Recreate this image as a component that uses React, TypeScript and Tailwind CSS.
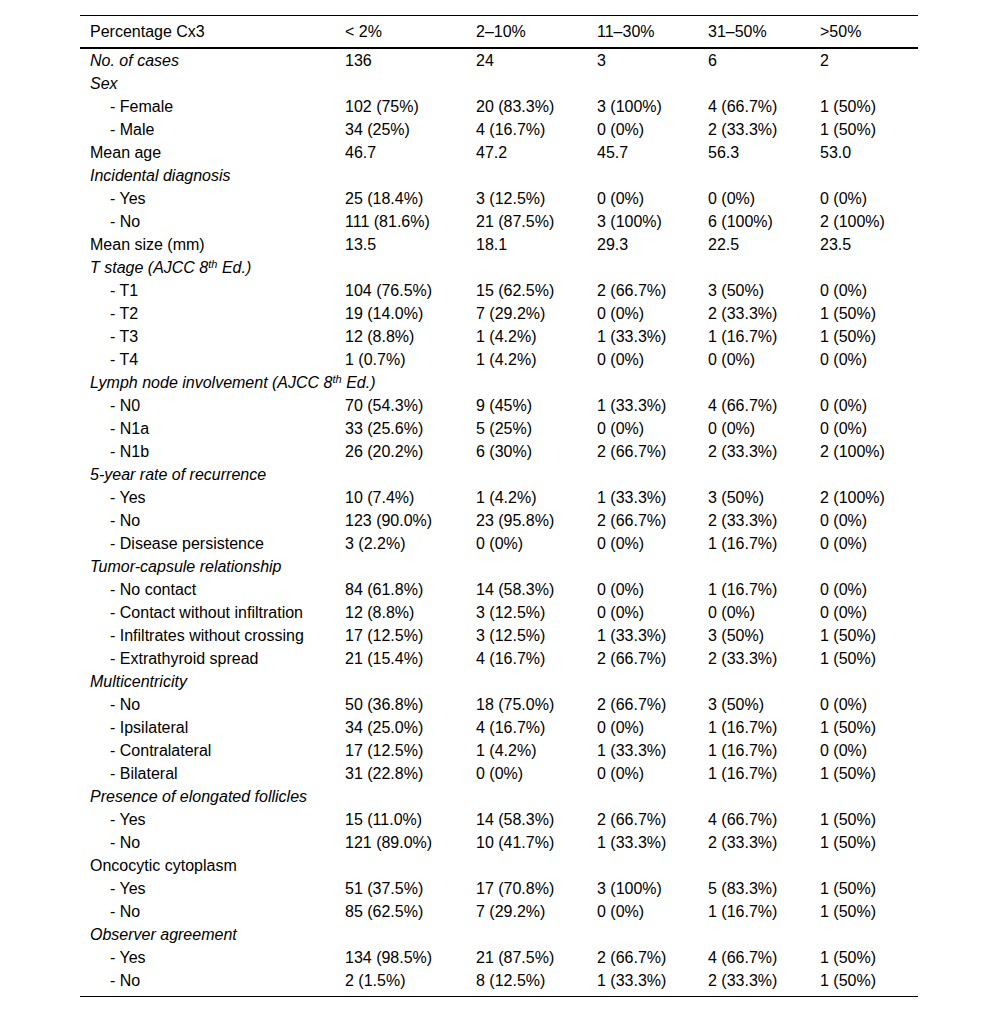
type Row = {
  label: string
  sup?: [string, string]
  kind: 'head' | 'plain' | 'sub'
  values?: string[]
}

const rows: Row[] = [
  { label: 'No. of cases', kind: 'head', values: ['136', '24', '3', '6', '2'] },
  { label: 'Sex', kind: 'head' },
  { label: '- Female', kind: 'sub', values: ['102 (75%)', '20 (83.3%)', '3 (100%)', '4 (66.7%)', '1 (50%)'] },
  { label: '- Male', kind: 'sub', values: ['34 (25%)', '4 (16.7%)', '0 (0%)', '2 (33.3%)', '1 (50%)'] },
  { label: 'Mean age', kind: 'plain', values: ['46.7', '47.2', '45.7', '56.3', '53.0'] },
  { label: 'Incidental diagnosis', kind: 'head' },
  { label: '- Yes', kind: 'sub', values: ['25 (18.4%)', '3 (12.5%)', '0 (0%)', '0 (0%)', '0 (0%)'] },
  { label: '- No', kind: 'sub', values: ['111 (81.6%)', '21 (87.5%)', '3 (100%)', '6 (100%)', '2 (100%)'] },
  { label: 'Mean size (mm)', kind: 'plain', values: ['13.5', '18.1', '29.3', '22.5', '23.5'] },
  { label: 'T stage (AJCC 8', sup: ['th', ' Ed.)'], kind: 'head' },
  { label: '- T1', kind: 'sub', values: ['104 (76.5%)', '15 (62.5%)', '2 (66.7%)', '3 (50%)', '0 (0%)'] },
  { label: '- T2', kind: 'sub', values: ['19 (14.0%)', '7 (29.2%)', '0 (0%)', '2 (33.3%)', '1 (50%)'] },
  { label: '- T3', kind: 'sub', values: ['12 (8.8%)', '1 (4.2%)', '1 (33.3%)', '1 (16.7%)', '1 (50%)'] },
  { label: '- T4', kind: 'sub', values: ['1 (0.7%)', '1 (4.2%)', '0 (0%)', '0 (0%)', '0 (0%)'] },
  { label: 'Lymph node involvement (AJCC 8', sup: ['th', ' Ed.)'], kind: 'head' },
  { label: '- N0', kind: 'sub', values: ['70 (54.3%)', '9 (45%)', '1 (33.3%)', '4 (66.7%)', '0 (0%)'] },
  { label: '- N1a', kind: 'sub', values: ['33 (25.6%)', '5 (25%)', '0 (0%)', '0 (0%)', '0 (0%)'] },
  { label: '- N1b', kind: 'sub', values: ['26 (20.2%)', '6 (30%)', '2 (66.7%)', '2 (33.3%)', '2 (100%)'] },
  { label: '5-year rate of recurrence', kind: 'head' },
  { label: '- Yes', kind: 'sub', values: ['10 (7.4%)', '1 (4.2%)', '1 (33.3%)', '3 (50%)', '2 (100%)'] },
  { label: '- No', kind: 'sub', values: ['123 (90.0%)', '23 (95.8%)', '2 (66.7%)', '2 (33.3%)', '0 (0%)'] },
  { label: '- Disease persistence', kind: 'sub', values: ['3 (2.2%)', '0 (0%)', '0 (0%)', '1 (16.7%)', '0 (0%)'] },
  { label: 'Tumor-capsule relationship', kind: 'head' },
  { label: '- No contact', kind: 'sub', values: ['84 (61.8%)', '14 (58.3%)', '0 (0%)', '1 (16.7%)', '0 (0%)'] },
  { label: '- Contact without infiltration', kind: 'sub', values: ['12 (8.8%)', '3 (12.5%)', '0 (0%)', '0 (0%)', '0 (0%)'] },
  { label: '- Infiltrates without crossing', kind: 'sub', values: ['17 (12.5%)', '3 (12.5%)', '1 (33.3%)', '3 (50%)', '1 (50%)'] },
  { label: '- Extrathyroid spread', kind: 'sub', values: ['21 (15.4%)', '4 (16.7%)', '2 (66.7%)', '2 (33.3%)', '1 (50%)'] },
  { label: 'Multicentricity', kind: 'head' },
  { label: '- No', kind: 'sub', values: ['50 (36.8%)', '18 (75.0%)', '2 (66.7%)', '3 (50%)', '0 (0%)'] },
  { label: '- Ipsilateral', kind: 'sub', values: ['34 (25.0%)', '4 (16.7%)', '0 (0%)', '1 (16.7%)', '1 (50%)'] },
  { label: '- Contralateral', kind: 'sub', values: ['17 (12.5%)', '1 (4.2%)', '1 (33.3%)', '1 (16.7%)', '0 (0%)'] },
  { label: '- Bilateral', kind: 'sub', values: ['31 (22.8%)', '0 (0%)', '0 (0%)', '1 (16.7%)', '1 (50%)'] },
  { label: 'Presence of elongated follicles', kind: 'head' },
  { label: '- Yes', kind: 'sub', values: ['15 (11.0%)', '14 (58.3%)', '2 (66.7%)', '4 (66.7%)', '1 (50%)'] },
  { label: '- No', kind: 'sub', values: ['121 (89.0%)', '10 (41.7%)', '1 (33.3%)', '2 (33.3%)', '1 (50%)'] },
  { label: 'Oncocytic cytoplasm', kind: 'plain' },
  { label: '- Yes', kind: 'sub', values: ['51 (37.5%)', '17 (70.8%)', '3 (100%)', '5 (83.3%)', '1 (50%)'] },
  { label: '- No', kind: 'sub', values: ['85 (62.5%)', '7 (29.2%)', '0 (0%)', '1 (16.7%)', '1 (50%)'] },
  { label: 'Observer agreement', kind: 'head' },
  { label: '- Yes', kind: 'sub', values: ['134 (98.5%)', '21 (87.5%)', '2 (66.7%)', '4 (66.7%)', '1 (50%)'] },
  { label: '- No', kind: 'sub', values: ['2 (1.5%)', '8 (12.5%)', '1 (33.3%)', '2 (33.3%)', '1 (50%)'] },
]

const headers = ['Percentage Cx3', '< 2%', '2–10%', '11–30%', '31–50%', '>50%']

const grid = 'grid grid-cols-[255px_131px_121px_111px_112px_108px]'

export default function App() {
  return (
    <div className="min-h-[1013px] w-[1000px] bg-white pt-[15px] text-[16px] leading-[23px] text-black [font-family:'Liberation_Sans',Arial,sans-serif]">
      <div className="mx-[80px] w-[838px] border-t border-black">
        {/* Header */}
        <div className={`${grid} h-[33px] items-center border-b-2 border-black`}>
          {headers.map((h) => (
            <div key={h} className="whitespace-nowrap pl-[10px]">
              {h}
            </div>
          ))}
        </div>

        {/* Body */}
        <div className="border-b border-black pb-[4px]">
          {rows.map((r, i) => (
            <div key={i} className={`${grid} h-[23px] items-center`}>
              <div
                className={`whitespace-nowrap ${r.kind === 'sub' ? 'pl-[30px]' : 'pl-[10px]'} ${
                  r.kind === 'head' ? 'italic' : ''
                }`}
              >
                {r.label}
                {r.sup && (
                  <>
                    <sup className="text-[11px]">{r.sup[0]}</sup>
                    {r.sup[1]}
                  </>
                )}
              </div>
              {(r.values ?? ['', '', '', '', '']).map((v, j) => (
                <div key={j} className="whitespace-nowrap pl-[10px]">
                  {v}
                </div>
              ))}
            </div>
          ))}
        </div>
      </div>
    </div>
  )
}
